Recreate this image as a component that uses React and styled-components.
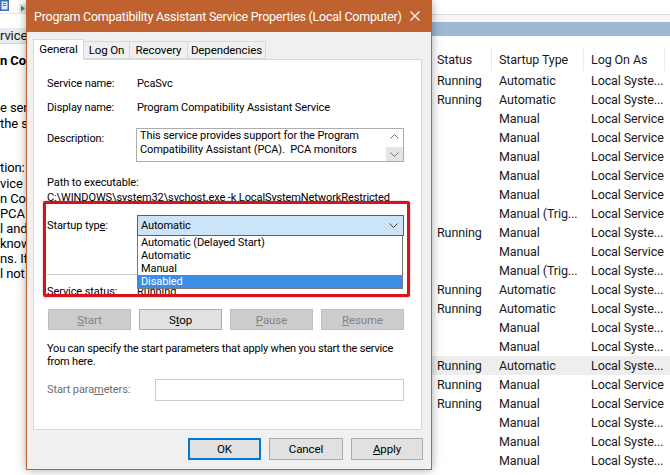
import React from 'react';
import styled, { createGlobalStyle } from 'styled-components';

const FONT = `Roboto, "Noto Sans", sans-serif`;

const GlobalStyle = createGlobalStyle`
  html, body { margin: 0; padding: 0; }
  body {
    width: 670px; height: 475px; overflow: hidden;
    background: #fff; font-family: ${FONT}; color: #000;
  }
  * { box-sizing: border-box; }
`;

const Desktop = styled.div`
  display: grid;
  grid-template-columns: 26px 406px 238px;
  width: 670px;
  height: 475px;
  overflow: hidden;
  background: #fff;
`;

/* ---------- background services window, left strip ---------- */
const BackLeft = styled.div`
  display: flex;
  flex-direction: column;
  overflow: hidden;
  background: #fff;
  font-size: 13px;
  letter-spacing: -0.1px;
`;
const LeftToolbar = styled.div`
  height: 14px;
  display: flex;
  justify-content: space-between;
  align-items: flex-start;
  border-bottom: 1px solid #e4e4e4;
`;
const LeftTab = styled.div`
  margin-top: 14px;
  height: 16px;
  line-height: 16px;
  background: #e7ecf2;
  border-bottom: 1px solid #d3dae3;
  white-space: nowrap;
  color: #111;
`;
const LeftLine = styled.div`
  white-space: nowrap;
  line-height: 15px;
  font-weight: ${p => (p.$bold ? 700 : 400)};
  margin-top: ${p => p.$mt || 0}px;
`;

/* ---------- background services window, right list ---------- */
const BackRight = styled.div`
  display: flex;
  flex-direction: column;
  background: #fff;
  font-size: 12.5px;
  letter-spacing: -0.1px;
  overflow: hidden;
`;
const RightTop = styled.div`
  height: 15px;
  background: #fff;
  border-bottom: 1px solid #dadada;
`;
const RightGap = styled.div`
  height: 7px;
  background: #f6f6f6;
`;
const BlueBar = styled.div`
  height: 14px;
  background: #9db7d4;
`;
const Cols = styled.div`
  display: grid;
  grid-template-columns: 60px 92px 81px;
`;
const HeaderRow = styled(Cols)`
  margin-top: 11px;
  height: 24px;
`;
const HeaderCell = styled.div`
  display: flex;
  align-items: center;
  padding-left: ${p => (p.$first ? 5 : 7)}px;
  border-right: 1px solid #e8ebee;
  white-space: nowrap;
  color: #1a1a1a;
`;
const ListRow = styled(Cols)`
  height: 19px;
  align-items: center;
  background: ${p => (p.$hi ? '#eeeeee' : 'transparent')};
`;
const ListCell = styled.div`
  padding-left: ${p => (p.$first ? 5 : 7)}px;
  white-space: nowrap;
  overflow: hidden;
  color: #1a1a1a;
`;

/* ---------- dialog ---------- */
const Dialog = styled.div`
  position: relative;
  z-index: 1;
  align-self: start;
  height: 470px;
  display: flex;
  flex-direction: column;
  background: #f0f0f0;
  border: 1px solid #c0622f;
  border-top: none;
  box-shadow: 0 0 9px rgba(0, 0, 0, 0.35);
  font-size: 11px;
  letter-spacing: -0.1px;
`;
const TitleBar = styled.div`
  height: 32px;
  flex: none;
  background: #c0622f;
  color: #fff;
  display: flex;
  align-items: center;
  justify-content: space-between;
  padding: 0 11px 0 7px;
  font-size: 12.5px;
  letter-spacing: -0.25px;
  white-space: nowrap;
`;
const Body = styled.div`
  display: flex;
  flex-direction: column;
  padding: 7px 9px 0 6px;
`;
const TabStrip = styled.div`
  display: flex;
  align-items: flex-end;
  height: 20px;
`;
const Tab = styled.div`
  width: ${p => p.$w}px;
  height: ${p => (p.$active ? 21 : 18)}px;
  margin-bottom: ${p => (p.$active ? -1 : 0)}px;
  margin-left: ${p => (p.$active ? 0 : -1)}px;
  position: relative;
  z-index: ${p => (p.$active ? 2 : 0)};
  background: ${p => (p.$active ? '#fff' : '#f0f0f0')};
  border: 1px solid #d9d9d9;
  border-bottom: ${p => (p.$active ? 'none' : '1px solid #d9d9d9')};
  display: flex;
  align-items: center;
  justify-content: center;
  padding-bottom: ${p => (p.$active ? 3 : 0)}px;
  font-size: 11.5px;
  white-space: nowrap;
`;
const Panel = styled.div`
  position: relative;
  height: 371px;
  background: #fff;
  border: 1px solid #d9d9d9;
  padding: 0 17px 0 13px;
  display: flex;
  flex-direction: column;
`;
const Field = styled.div`
  display: grid;
  grid-template-columns: ${p => p.$label || 90}px 1fr;
  align-items: start;
  margin-top: ${p => p.$mt || 0}px;
  line-height: ${p => p.$lh || 16}px;
  white-space: nowrap;
`;
const Label = styled.div`
  padding-top: ${p => p.$pt || 0}px;
  color: ${p => (p.$disabled ? '#6d6d6d' : '#000')};
`;
const Line = styled.div`
  line-height: ${p => p.$lh || 15}px;
  margin-top: ${p => p.$mt || 0}px;
  white-space: nowrap;
`;
const DescBox = styled.div`
  position: relative;
  margin-left: -1px;
  height: 34px;
  border: 1px solid #adadad;
  display: flex;
  background: #fff;
`;
const DescText = styled.div`
  flex: 1;
  padding: 0 0 0 3px;
  line-height: 14px;
`;
const ScrollCol = styled.div`
  width: 17px;
  display: flex;
  flex-direction: column;
  justify-content: space-between;
`;
const ScrollBtn = styled.div`
  height: 14px;
  display: flex;
  align-items: center;
  justify-content: center;
  background: ${p => (p.$hover ? '#e5e5e5' : 'transparent')};
`;
const ComboWrap = styled.div`
  position: relative;
`;
const Combo = styled.div`
  height: 21px;
  border: 1px solid #0078d7;
  background: #cce4f7;
  display: flex;
  align-items: center;
  justify-content: space-between;
  padding: 0 5px 0 3px;
`;
const DropList = styled.div`
  position: absolute;
  top: 21px;
  left: 0;
  width: 266px;
  height: 53px;
  background: #fff;
  border: 1px solid #7a7a7a;
  border-top: none;
  z-index: 3;
`;
const DropItem = styled.div`
  height: 13px;
  line-height: 13px;
  padding-left: 3px;
  background: ${p => (p.$sel ? '#3a8ee6' : 'transparent')};
  color: ${p => (p.$sel ? '#fff' : '#000')};
`;
const Separator = styled.div`
  margin-top: 38.5px;
  height: 1px;
  background: #c9c9c9;
`;
const ButtonGrid = styled.div`
  margin-top: 9px;
  margin-left: 1px;
  display: grid;
  grid-template-columns: repeat(4, 1fr);
  gap: 8px;
`;
const Btn = styled.div`
  height: ${p => p.$h || 21}px;
  width: ${p => (p.$w ? p.$w + 'px' : 'auto')};
  display: flex;
  align-items: center;
  justify-content: center;
  background: ${p => (p.$disabled ? '#cccccc' : '#e1e1e1')};
  color: ${p => (p.$disabled ? '#838383' : '#000')};
  border: ${p => (p.$default ? '2px solid #0078d7' : p.$disabled ? '1px solid #bfbfbf' : '1px solid #adadad')};
  font-size: 11.5px;
  white-space: nowrap;
`;
const Para = styled.div`
  margin-top: 12px;
  line-height: 13px;
  letter-spacing: -0.2px;
  white-space: nowrap;
`;
const ParamInput = styled.div`
  height: 22px;
  border: 1px solid #cccccc;
  background: #fff;
`;
const RedBox = styled.div`
  position: absolute;
  left: 9px;
  top: 141px;
  width: 367px;
  height: 96px;
  border: 3px solid #d7121c;
  border-radius: 2px;
  box-shadow: 0 0 2px rgba(120, 0, 0, 0.4);
  z-index: 4;
  pointer-events: none;
`;
const Footer = styled.div`
  display: flex;
  justify-content: flex-end;
  gap: 8px;
  margin-top: 8px;
  margin-right: -1px;
`;

const U = styled.span`
  text-decoration: underline;
  text-underline-offset: 1px;
`;

const rows = [
  ['Running', 'Automatic', 'Local Syste...'],
  ['Running', 'Automatic', 'Local Syste...'],
  ['', 'Manual', 'Local Service'],
  ['', 'Manual', 'Local Service'],
  ['', 'Manual', 'Local Service'],
  ['', 'Manual', 'Local Service'],
  ['', 'Manual', 'Local Service'],
  ['', 'Manual (Trig...', 'Local Service'],
  ['Running', 'Manual', 'Local Syste...'],
  ['', 'Manual', 'Local Service'],
  ['', 'Manual (Trig...', 'Local Syste...'],
  ['Running', 'Automatic', 'Local Syste...'],
  ['Running', 'Automatic', 'Local Syste...'],
  ['', 'Manual', 'Local Syste...'],
  ['', 'Manual', 'Local Syste...'],
  ['Running', 'Automatic', 'Local Syste...', true],
  ['Running', 'Manual', 'Local Service'],
  ['Running', 'Manual', 'Local Service'],
  ['', 'Manual', 'Local Syste...'],
  ['', 'Manual', 'Local Syste...'],
  ['', 'Manual', 'Local Syste...'],
];

const Chevron = ({ up, color = '#444' }) => (
  <svg width="9" height="5" viewBox="0 0 9 5">
    <path
      d={up ? 'M0.5 4.5 L4.5 0.5 L8.5 4.5' : 'M0.5 0.5 L4.5 4.5 L8.5 0.5'}
      fill="none"
      stroke={color}
      strokeWidth="1"
    />
  </svg>
);

export default function App() {
  return (
    <>
      <GlobalStyle />
      <Desktop>
        <BackLeft>
          <LeftToolbar>
            <svg width="9" height="11" viewBox="0 0 9 11">
              <rect x="0" y="0" width="9" height="11" fill="#3d6fb6" />
              <rect x="1.5" y="1.5" width="6" height="8" fill="#dfe9f7" />
              <rect x="3" y="3" width="3" height="1" fill="#3d6fb6" />
              <rect x="3" y="5" width="3" height="1" fill="#3d6fb6" />
            </svg>
            <svg width="7" height="9" viewBox="0 0 7 9" style={{ marginTop: 4 }}>
              <rect x="0" y="0" width="7" height="9" fill="#e9e9e9" />
              <path d="M2 1.5 L6 4.5 L2 7.5 Z" fill="#2e9a3c" />
            </svg>
          </LeftToolbar>
          <LeftTab>rvice</LeftTab>
          <LeftLine $bold $mt={9}>n Co</LeftLine>
          <LeftLine $mt={32}>e serv</LeftLine>
          <LeftLine $mt={1}>the se</LeftLine>
          <LeftLine $mt={29}>tion:</LeftLine>
          <LeftLine $mt={1}>vice p</LeftLine>
          <LeftLine>n Com</LeftLine>
          <LeftLine>PCA</LeftLine>
          <LeftLine>l and</LeftLine>
          <LeftLine>know</LeftLine>
          <LeftLine>ns. If</LeftLine>
          <LeftLine>l not</LeftLine>
        </BackLeft>

        <Dialog>
          <TitleBar>
            <span>Program Compatibility Assistant Service Properties (Local Computer)</span>
            <svg width="10" height="10" viewBox="0 0 10 10">
              <path d="M0.5 0.5 L9.5 9.5 M9.5 0.5 L0.5 9.5" stroke="#fff" strokeWidth="1.1" />
            </svg>
          </TitleBar>
          <Body>
            <TabStrip>
              <Tab $active $w={51}>General</Tab>
              <Tab $w={47}>Log On</Tab>
              <Tab $w={59}>Recovery</Tab>
              <Tab $w={79}>Dependencies</Tab>
            </TabStrip>
            <Panel>
              <Field $mt={16}>
                <Label>Service name:</Label>
                <div>PcaSvc</div>
              </Field>
              <Field $mt={8}>
                <Label>Display name:</Label>
                <div>Program Compatibility Assistant Service</div>
              </Field>
              <Field $mt={12}>
                <Label $pt={3}>Description:</Label>
                <DescBox>
                  <DescText>
                    This service provides support for the Program
                    <br />
                    Compatibility Assistant (PCA).&nbsp; PCA monitors
                  </DescText>
                  <ScrollCol>
                    <ScrollBtn>
                      <Chevron up color="#707070" />
                    </ScrollBtn>
                    <ScrollBtn $hover>
                      <Chevron color="#707070" />
                    </ScrollBtn>
                  </ScrollCol>
                </DescBox>
              </Field>
              <Line $mt={12.5}>Path to executable:</Line>
              <Line>C:\WINDOWS\system32\svchost.exe -k LocalSystemNetworkRestricted</Line>
              <Field $mt={10} $lh={21}>
                <Label>
                  Startup typ<U>e</U>:
                </Label>
                <ComboWrap>
                  <Combo>
                    <span>Automatic</span>
                    <Chevron />
                  </Combo>
                  <DropList>
                    <DropItem>Automatic (Delayed Start)</DropItem>
                    <DropItem>Automatic</DropItem>
                    <DropItem>Manual</DropItem>
                    <DropItem $sel>Disabled</DropItem>
                  </DropList>
                </ComboWrap>
              </Field>
              <Separator />
              <Field $mt={9}>
                <Label>Service status:</Label>
                <div>Running</div>
              </Field>
              <ButtonGrid>
                <Btn $disabled>
                  <span><U>S</U>tart</span>
                </Btn>
                <Btn>
                  <span>S<U>t</U>op</span>
                </Btn>
                <Btn $disabled>
                  <span><U>P</U>ause</span>
                </Btn>
                <Btn $disabled>
                  <span><U>R</U>esume</span>
                </Btn>
              </ButtonGrid>
              <Para>
                You can specify the start parameters that apply when you start the service
                <br />
                from here.
              </Para>
              <Field $mt={11} $label={108} $lh={22}>
                <Label $disabled>
                  Start para<U>m</U>eters:
                </Label>
                <ParamInput />
              </Field>
              <RedBox />
            </Panel>
            <Footer>
              <Btn $default $w={73} $h={22}>OK</Btn>
              <Btn $w={74} $h={22}>Cancel</Btn>
              <Btn $w={72} $h={22}>
                <span><U>A</U>pply</span>
              </Btn>
            </Footer>
          </Body>
        </Dialog>

        <BackRight>
          <RightTop />
          <RightGap />
          <BlueBar />
          <HeaderRow>
            <HeaderCell $first>Status</HeaderCell>
            <HeaderCell>Startup Type</HeaderCell>
            <HeaderCell>Log On As</HeaderCell>
          </HeaderRow>
          {rows.map((r, i) => (
            <ListRow key={i} $hi={r[3]}>
              <ListCell $first>{r[0]}</ListCell>
              <ListCell>{r[1]}</ListCell>
              <ListCell>{r[2]}</ListCell>
            </ListRow>
          ))}
        </BackRight>
      </Desktop>
    </>
  );
}
